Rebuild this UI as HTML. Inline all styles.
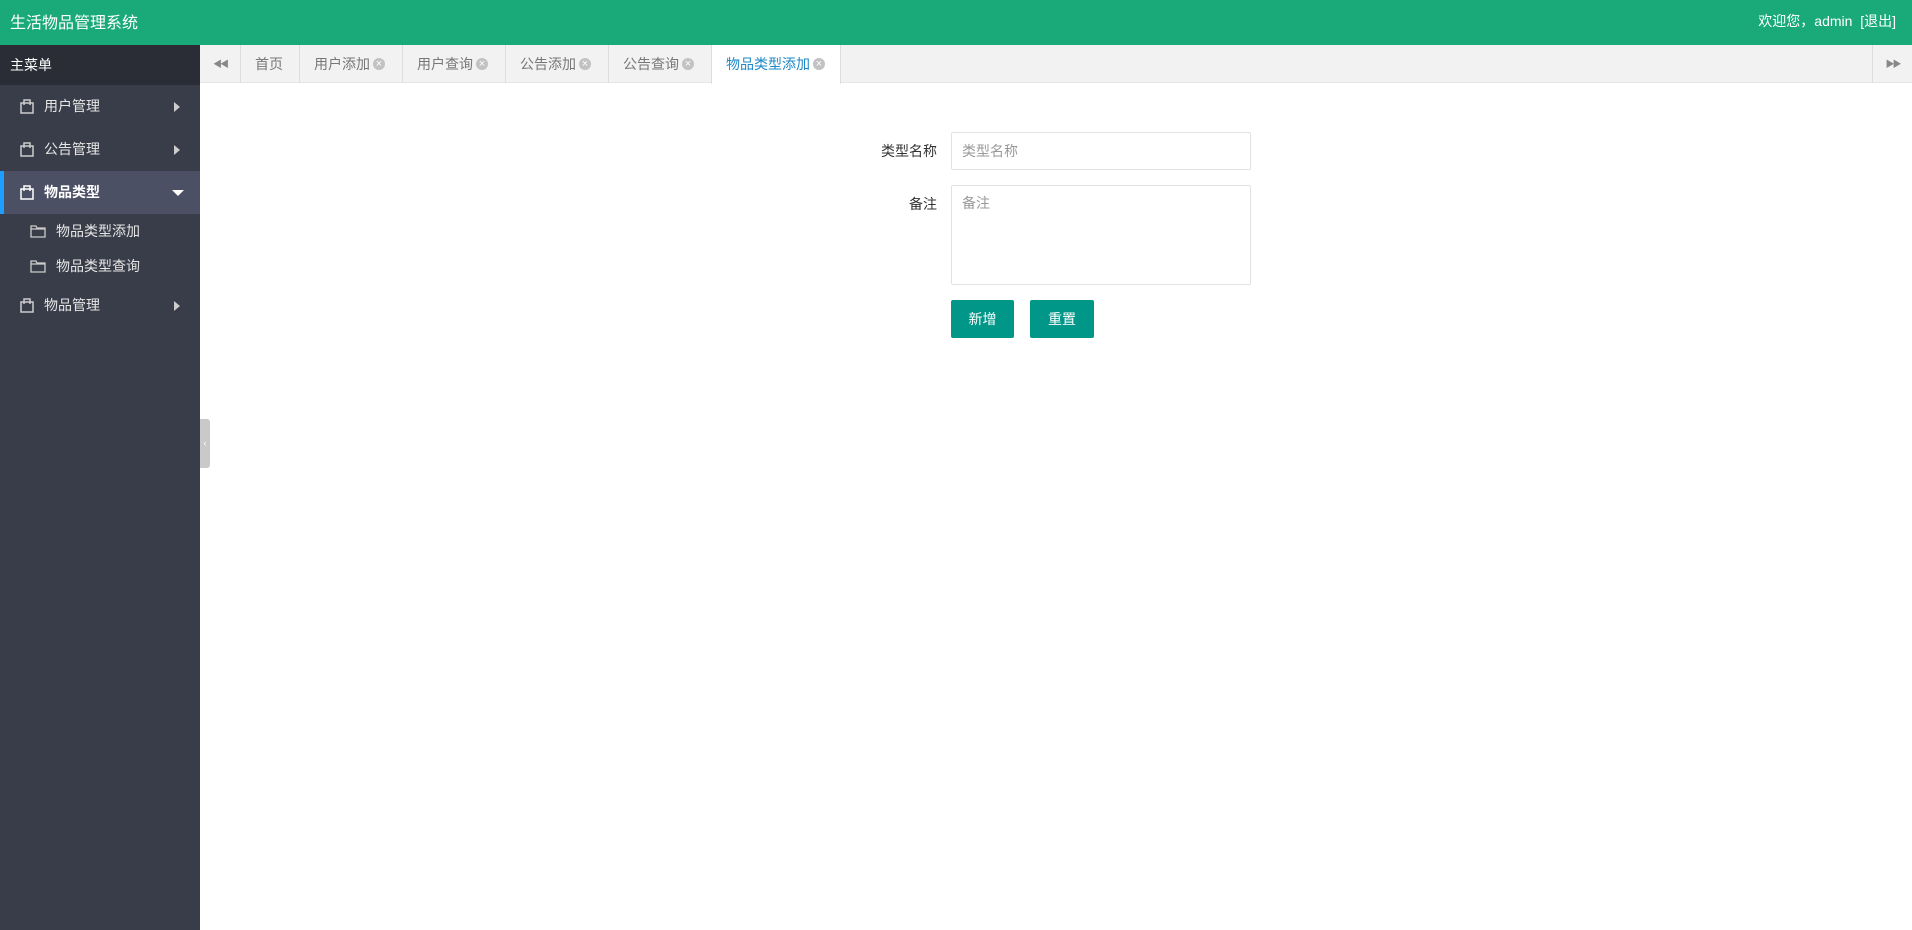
<!DOCTYPE html>
<html><head><meta charset="utf-8"><style>
*{margin:0;padding:0;box-sizing:border-box}
body{width:1912px;height:930px;overflow:hidden;font-family:"Liberation Sans","Noto Sans CJK SC",sans-serif;background:#fff;position:relative}
.hd{position:absolute;left:0;top:0;width:1912px;height:45px;background:#1aaa7a;color:#fff}
.hd .t{position:absolute;left:10px;top:9px;font-size:16px}
.hd .r{position:absolute;right:16px;top:11px;font-size:14px}
.sb{position:absolute;left:0;top:45px;width:200px;height:885px;background:#393d49;color:#e6e6e6;font-size:14px}
.sb .ttl{height:40px;background:#2a2d35;color:#fff;padding:10px 10px;font-size:14px}
.it{position:relative;height:43px;line-height:43px;padding-left:44px}
.it svg{position:absolute;left:20px;top:13px}
.it .ar{position:absolute;right:20px;top:17px;width:0;height:0;border-top:5px solid transparent;border-bottom:5px solid transparent;border-left:6px solid #ccc}
.it.act{background:#4b5064;color:#fff;font-weight:bold}
.it.act:before{content:"";position:absolute;left:0;top:0;width:4px;height:43px;background:#1e9fff}
.it.act .ar{right:16px;top:19px;border-left:6px solid transparent;border-right:6px solid transparent;border-top:6px solid #fff;border-bottom:0}
.sub{position:relative;height:35px;line-height:35px;padding-left:56px;font-size:14px}
.sub svg{position:absolute;left:30px;top:11px}
.tabs{position:absolute;left:200px;top:45px;width:1712px;height:38px;background:#f2f2f2;border-bottom:1px solid #e6e6e6;font-size:14px;color:#777}
.tab{position:absolute;top:0;height:38px;line-height:38px;border-left:1px solid #ddd;padding-left:14px}
.tab i{display:inline-block;width:12px;height:12px;border-radius:50%;background:#c2c2c2;vertical-align:-1px;margin-left:3px;position:relative}
.tab i:before{content:"×";position:absolute;left:0;top:-13px;width:12px;text-align:center;color:#fff;font-size:11px;font-style:normal}
.tab.a{background:#fff;color:#1e88c7;border-right:1px solid #ddd;height:39px}
.btnl,.btnr{position:absolute;top:0;width:40px;height:38px;line-height:38px;text-align:center;color:#888;font-size:9px;letter-spacing:-2px}
.lbl{position:absolute;font-size:14px;color:#333;text-align:right;width:100px}
.inp{position:absolute;border:1px solid #e2e2e2;border-radius:2px;background:#fff;color:#999;font-size:14px;padding-left:10px}
.btn{position:absolute;top:300px;height:38px;line-height:38px;width:63px;text-align:center;color:#fff;background:#009688;border-radius:2px;font-size:14px}
</style></head><body>
<div class="hd"><div class="t">生活物品管理系统</div><div class="r">欢迎您，admin &nbsp;[退出]</div></div>
<div class="sb">
<div class="ttl">主菜单</div>
<div class="it"><svg width="14" height="16" viewBox="0 0 14 16"><rect x="1" y="5" width="12" height="10" fill="none" stroke="#ccc" stroke-width="1.5"/><path d="M4 7V2h6v5" fill="none" stroke="#ccc" stroke-width="1.5"/></svg>用户管理<span class="ar"></span></div>
<div class="it"><svg width="14" height="16" viewBox="0 0 14 16"><rect x="1" y="5" width="12" height="10" fill="none" stroke="#ccc" stroke-width="1.5"/><path d="M4 7V2h6v5" fill="none" stroke="#ccc" stroke-width="1.5"/></svg>公告管理<span class="ar"></span></div>
<div class="it act"><svg width="14" height="16" viewBox="0 0 14 16"><rect x="1" y="5" width="12" height="10" fill="none" stroke="#fff" stroke-width="1.5"/><path d="M4 7V2h6v5" fill="none" stroke="#fff" stroke-width="1.5"/></svg>物品类型<span class="ar"></span></div>
<div class="sub"><svg width="16" height="13" viewBox="0 0 16 13"><path d="M1 1h5l1 2h8v9H1z M1 4h14" fill="none" stroke="#ccc" stroke-width="1.3"/></svg>物品类型添加</div>
<div class="sub"><svg width="16" height="13" viewBox="0 0 16 13"><path d="M1 1h5l1 2h8v9H1z M1 4h14" fill="none" stroke="#ccc" stroke-width="1.3"/></svg>物品类型查询</div>
<div class="it"><svg width="14" height="16" viewBox="0 0 14 16"><rect x="1" y="5" width="12" height="10" fill="none" stroke="#ccc" stroke-width="1.5"/><path d="M4 7V2h6v5" fill="none" stroke="#ccc" stroke-width="1.5"/></svg>物品管理<span class="ar"></span></div>
</div>
<div style="position:absolute;left:200px;top:419px;width:10px;height:49px;background:#c9c9c9;border-radius:0 3px 3px 0;color:#fff;font-size:9px;line-height:49px;text-align:center">‹</div>
<div class="tabs">
<div class="btnl">◀◀</div>
<div class="tab" style="left:40px;width:59px">首页</div>
<div class="tab" style="left:99px;width:103px">用户添加<i></i></div>
<div class="tab" style="left:202px;width:103px">用户查询<i></i></div>
<div class="tab" style="left:305px;width:103px">公告添加<i></i></div>
<div class="tab" style="left:408px;width:103px">公告查询<i></i></div>
<div class="tab a" style="left:511px;width:130px">物品类型添加<i></i></div>
<div class="btnr" style="right:0;border-left:1px solid #ddd">▶▶</div>
</div>
<div class="lbl" style="left:837px;top:141px">类型名称</div>
<div class="inp" style="left:951px;top:132px;width:300px;height:38px;line-height:36px">类型名称</div>
<div class="lbl" style="left:837px;top:194px">备注</div>
<div class="inp" style="left:951px;top:185px;width:300px;height:100px;padding-top:7px">备注</div>
<div class="btn" style="left:951px">新增</div>
<div class="btn" style="left:1030px;width:64px">重置</div>
</body></html>
